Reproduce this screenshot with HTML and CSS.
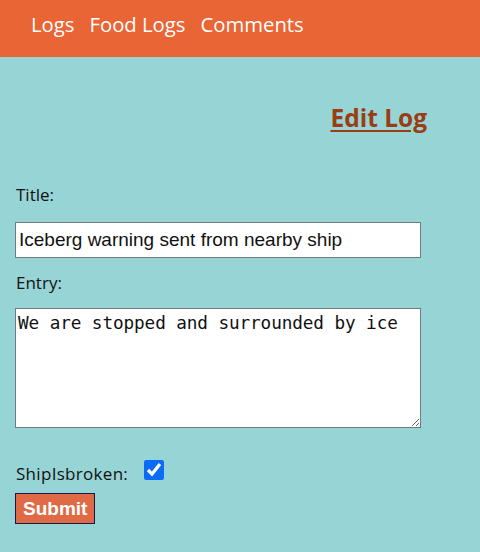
FILE: index.html
```html
<!DOCTYPE html>
<html>
<head>
<meta charset="utf-8">
<link rel="stylesheet" href="styles.css">
</head>
<body>
<nav class="navbar">
  <a class="nav-link" href="#">Logs</a>
  <a class="nav-link" href="#">Food Logs</a>
  <a class="nav-link" href="#">Comments</a>
</nav>
<main class="content">
  <h1 class="page-title"><a href="#">Edit Log</a></h1>
  <form class="log-form">
    <label class="field-label" for="title">Title:</label>
    <input class="text-input" id="title" type="text" value="Iceberg warning sent from nearby ship">
    <label class="field-label" for="entry">Entry:</label>
    <textarea class="text-area" id="entry">We are stopped and surrounded by ice</textarea>
    <div class="check-row">
      <label class="check-label" for="broken">ShipIsbroken:</label>
      <input class="check" id="broken" type="checkbox" checked>
    </div>
    <button class="submit-btn" type="button">Submit</button>
  </form>
</main>
</body>
</html>
```
FILE: styles.css
```css
html, body {
  margin: 0;
  padding: 0;
}
body {
  background: #97d4d6;
  font-family: "Open Sans", "Noto Sans", sans-serif;
  color: #111;
  height: 552px;
}
.navbar {
  background: #e96535;
  height: 57px;
  display: flex;
  align-items: flex-start;
  gap: 15px;
  padding: 10px 0 0 31px;
  box-sizing: border-box;
}
.nav-link {
  color: #fff;
  text-decoration: none;
  font-size: 20.3px;
  line-height: 29px;
}
.content {
  padding: 0 15px;
}
.page-title {
  margin: 0;
  padding: 44px 38px 0 0;
  text-align: right;
  font-size: 24.5px;
  line-height: 34px;
  font-weight: 700;
}
.page-title a {
  color: #9b3d12;
  text-decoration: underline;
  text-underline-offset: 3px;
}
.log-form {
  display: flex;
  flex-direction: column;
  align-items: flex-start;
  padding-top: 48px;
}
.field-label {
  font-size: 17px;
  line-height: 24px;
  padding-left: 1px;
}
.text-input {
  margin: 15px 0 13px;
  width: 406px;
  height: 36px;
  box-sizing: border-box;
  border: 1px solid #6e7b80;
  background: #fff;
  font-family: "Liberation Sans", Arial, sans-serif;
  font-size: 19px;
  padding: 0 3px;
  color: #111;
}
.text-area {
  margin: 13px 0 0;
  width: 406px;
  height: 120px;
  box-sizing: border-box;
  border: 1px solid #6e7b80;
  background: #fff;
  font-family: "DejaVu Sans Mono", monospace;
  font-size: 17.7px;
  letter-spacing: -0.1px;
  padding: 4px 2px 2px;
  color: #111;
  resize: both;
}
.check-row {
  display: flex;
  align-items: center;
  gap: 16px;
  margin-top: 32px;
  padding-left: 1px;
}
.check-label {
  font-size: 17px;
  line-height: 24px;
  letter-spacing: 0.3px;
}
.check {
  width: 20px;
  height: 20px;
  margin: 0 0 8px 0;
  accent-color: #0a6cf5;
}
.submit-btn {
  margin-top: 5px;
  background: #df6a45;
  color: #fff;
  border: 1px solid #17174a;
  font-family: "Liberation Sans", Arial, sans-serif;
  font-weight: 700;
  font-size: 19px;
  height: 31px;
  padding: 0 7px;
}
```
